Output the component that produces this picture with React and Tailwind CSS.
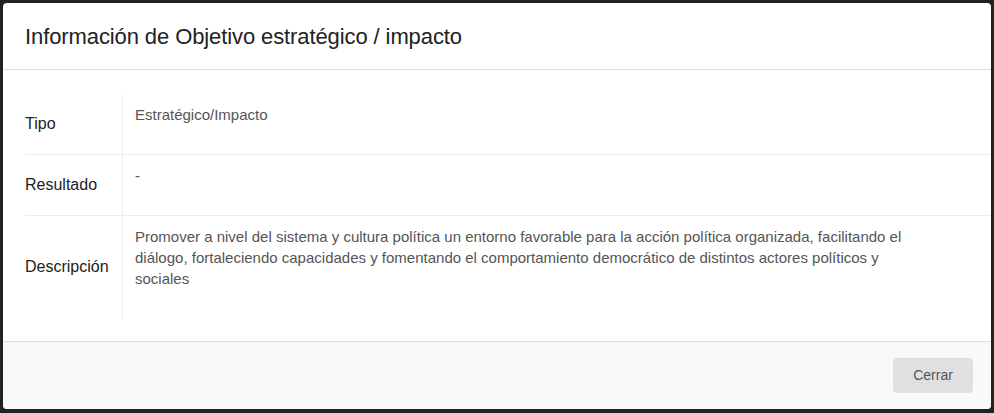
const ROWS = [
  { label: 'Tipo', value: 'Estratégico/Impacto', h: 'h-[60px]' },
  { label: 'Resultado', value: '-', h: 'h-[61px]' },
  {
    label: 'Descripción',
    value:
      'Promover a nivel del sistema y cultura política un entorno favorable para la acción política organizada, facilitando el diálogo, fortaleciendo capacidades y fomentando el comportamiento democrático de distintos actores políticos y sociales',
    h: 'h-[103px]',
  },
];

export default function App() {
  return (
    <div className="w-[994px] h-[413px] bg-[#222222] p-[3px] font-['Liberation_Sans',Arial,sans-serif]">
      <div className="w-[988px] h-[406px] bg-white rounded-[4px] overflow-hidden flex flex-col">
        {/* Header */}
        <div className="h-[67px] shrink-0 border-b border-[#dedede] flex items-center px-[22px]">
          <h1 className="text-[22px] text-[#222] tracking-[-0.1px]">
            Información de Objetivo estratégico / impacto
          </h1>
        </div>

        {/* Body */}
        <div className="flex-1 pt-[24px] pl-[22px]">
          {ROWS.map((row, i) => (
            <div
              key={row.label}
              className={`flex ${row.h} ${i > 0 ? 'border-t border-[#ececec]' : ''}`}
            >
              <div className="w-[98px] shrink-0 flex items-center text-[16px] text-[#222] border-r border-[#ececec]">
                {row.label}
              </div>
              <div className="pl-[12px] pt-[10px] w-[802px] text-[15px] leading-[21px] text-[#555]">
                {row.value}
              </div>
            </div>
          ))}
        </div>

        {/* Footer */}
        <div className="h-[68px] shrink-0 bg-[#f8f9fa] border-t border-[#dedede] flex items-center justify-end pr-[18px]">
          <button className="w-[80px] h-[35px] rounded-[4px] bg-[#e0e0e1] text-[14px] text-[#555]">
            Cerrar
          </button>
        </div>
      </div>
    </div>
  );
}
